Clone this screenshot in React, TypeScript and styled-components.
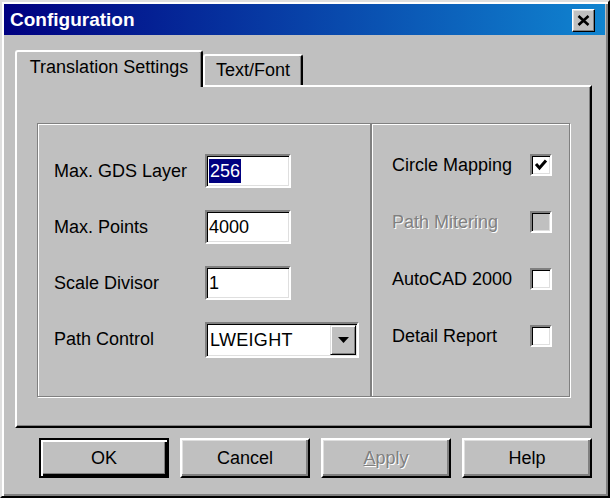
import React from "react";
import styled, { createGlobalStyle, css } from "styled-components";

const GlobalStyle = createGlobalStyle`
  html, body { margin: 0; padding: 0; background: #c0c0c0; }
  body { font-family: "Liberation Sans", Arial, sans-serif; }
`;

const Window = styled.div`
  box-sizing: border-box;
  width: 610px;
  height: 498px;
  background: #c0c0c0;
  border: 2px solid;
  border-color: #dfdfdf #000 #000 #dfdfdf;
  box-shadow: inset 2px 2px 0 #fff, inset -2px -2px 0 #808080;
  padding: 2px 3px 2px 2px;
  display: flex;
  flex-direction: column;
  font-family: "Liberation Sans", Arial, sans-serif;
  font-size: 18px;
  color: #000;
`;

const TitleBar = styled.div`
  height: 31px;
  flex: none;
  display: flex;
  align-items: center;
  justify-content: space-between;
  padding: 0 10px 0 6px;
  background: linear-gradient(to right, #000080, #1084d0);
`;

const Title = styled.span`
  color: #fff;
  font-weight: bold;
  font-size: 19px;
`;

const CloseButton = styled.div`
  box-sizing: border-box;
  width: 23px;
  height: 23px;
  margin-top: 2px;
  background: #c0c0c0;
  border: 1px solid;
  border-color: #fff #000 #000 #fff;
  box-shadow: inset -1px -1px 0 #808080, inset 1px 1px 0 #dfdfdf;
  display: flex;
  align-items: center;
  justify-content: center;
`;

const Body = styled.div`
  flex: 1;
  display: flex;
  flex-direction: column;
  padding: 15px 13px 0 11px;
`;

const TabStrip = styled.div`
  display: flex;
  align-items: flex-end;
  height: 35px;
  position: relative;
  z-index: 2;
`;

const Tab = styled.div<{ $active?: boolean; $width: number }>`
  box-sizing: border-box;
  width: ${(p) => p.$width}px;
  height: ${(p) => (p.$active ? 37 : 31)}px;
  margin-bottom: ${(p) => (p.$active ? -2 : 0)}px;
  padding-bottom: ${(p) => (p.$active ? 5 : 1)}px;
  display: flex;
  align-items: center;
  justify-content: center;
  background: #c0c0c0;
  border-top: 2px solid #fff;
  border-left: 2px solid #fff;
  border-right: 2px solid #000;
  border-radius: 3px 3px 0 0;
  box-shadow: inset -1px 0 0 #808080;
  white-space: nowrap;
`;

const Panel = styled.div`
  box-sizing: border-box;
  height: 343px;
  border: 2px solid;
  border-color: #fff #000 #000 #fff;
  box-shadow: inset -1px -1px 0 #808080;
  padding: 36px 20px 29px 20px;
  display: flex;
`;

const Group = styled.div<{ $width: number }>`
  box-sizing: border-box;
  width: ${(p) => p.$width}px;
  height: 100%;
  border: 1px solid #808080;
  box-shadow: inset 1px 1px 0 #fff, 1px 1px 0 #fff;
  display: grid;
  align-content: start;
`;

const FieldGroup = styled(Group)`
  grid-template-columns: 151px auto;
  grid-auto-rows: 34px;
  row-gap: 22px;
  padding: 30px 0 0 16px;
`;

const OptionGroup = styled(Group)`
  grid-template-columns: 138px 22px;
  grid-auto-rows: 22px;
  row-gap: 35px;
  padding: 30px 0 0 20px;
`;

const Label = styled.span<{ $disabled?: boolean }>`
  display: flex;
  align-items: center;
  white-space: nowrap;
  ${(p) =>
    p.$disabled &&
    css`
      color: #808080;
      text-shadow: 1px 1px 0 #fff;
    `}
`;

const sunken = css`
  border: 2px solid;
  border-color: #808080 #fff #fff #808080;
  box-shadow: inset 1px 1px 0 #000, inset -1px -1px 0 #dfdfdf;
`;

const TextBox = styled.div`
  box-sizing: border-box;
  width: 86px;
  height: 34px;
  background: #fff;
  ${sunken}
  padding-left: 2px;
  display: flex;
  align-items: center;
`;

const Selected = styled.span`
  background: #000080;
  color: #fff;
  line-height: 24px;
  padding: 0 1px;
`;

const Combo = styled.div`
  box-sizing: border-box;
  width: 154px;
  height: 36px;
  align-self: start;
  background: #fff;
  ${sunken}
  padding: 1px 1px 1px 3px;
  display: flex;
  align-items: stretch;
`;

const ComboText = styled.span`
  flex: 1;
  display: flex;
  align-items: center;
  letter-spacing: 0.3px;
`;

const DropButton = styled.div`
  box-sizing: border-box;
  width: 26px;
  background: #c0c0c0;
  border: 1px solid;
  border-color: #dfdfdf #000 #000 #dfdfdf;
  box-shadow: inset 1px 1px 0 #fff, inset -1px -1px 0 #808080;
  display: flex;
  align-items: center;
  justify-content: center;
`;

const CheckBox = styled.div<{ $disabled?: boolean }>`
  box-sizing: border-box;
  width: 22px;
  height: 22px;
  background: ${(p) => (p.$disabled ? "#c0c0c0" : "#fff")};
  ${sunken}
  display: flex;
  align-items: center;
  justify-content: center;
`;

const ButtonRow = styled.div`
  display: flex;
  justify-content: flex-end;
  gap: 11px;
  margin-top: 10px;
`;

const Button = styled.div<{ $default?: boolean; $disabled?: boolean }>`
  box-sizing: border-box;
  width: 130px;
  height: 40px;
  background: #c0c0c0;
  display: flex;
  align-items: center;
  justify-content: center;
  font-size: 18px;
  border: 2px solid;
  border-color: #fff #000 #000 #fff;
  box-shadow: inset -2px -2px 0 #808080, inset 1px 1px 0 #dfdfdf;
  ${(p) =>
    p.$default &&
    css`
      border-color: #000;
      box-shadow: inset 2px 2px 0 #fff, inset -2px -2px 0 #000,
        inset -3px -3px 0 #808080;
    `}
  ${(p) =>
    p.$disabled &&
    css`
      color: #808080;
      text-shadow: 1px 1px 0 #fff;
    `}
`;

const Mnemonic = styled.span`
  text-decoration: underline;
`;

const CloseIcon = () => (
  <svg width="13" height="11" viewBox="0 0 13 11">
    <path d="M1.5 1 L11.5 10 M11.5 1 L1.5 10" stroke="#000" strokeWidth="2.6" />
  </svg>
);

const ArrowIcon = () => (
  <svg width="11" height="6" viewBox="0 0 11 6">
    <path d="M0 0 H11 L5.5 6 Z" fill="#000" />
  </svg>
);

const CheckIcon = () => (
  <svg width="14" height="14" viewBox="0 0 14 14">
    <path d="M2 6 L5.5 10 L12 2.5" fill="none" stroke="#000" strokeWidth="3" />
  </svg>
);

const fields = [
  { label: "Max. GDS Layer", value: "256", selected: true },
  { label: "Max. Points", value: "4000" },
  { label: "Scale Divisor", value: "1" },
];

const options = [
  { label: "Circle Mapping", checked: true },
  { label: "Path Mitering", disabled: true },
  { label: "AutoCAD 2000" },
  { label: "Detail Report" },
];

export default function App() {
  return (
    <>
      <GlobalStyle />
      <Window>
        <TitleBar>
          <Title>Configuration</Title>
          <CloseButton>
            <CloseIcon />
          </CloseButton>
        </TitleBar>
        <Body>
          <TabStrip>
            <Tab $active $width={188}>Translation Settings</Tab>
            <Tab $width={100}>Text/Font</Tab>
          </TabStrip>
          <Panel>
            <FieldGroup $width={334}>
              {fields.map((f) => (
                <React.Fragment key={f.label}>
                  <Label>{f.label}</Label>
                  <TextBox>{f.selected ? <Selected>{f.value}</Selected> : f.value}</TextBox>
                </React.Fragment>
              ))}
              <Label>Path Control</Label>
              <Combo>
                <ComboText>LWEIGHT</ComboText>
                <DropButton>
                  <ArrowIcon />
                </DropButton>
              </Combo>
            </FieldGroup>
            <OptionGroup $width={199}>
              {options.map((o) => (
                <React.Fragment key={o.label}>
                  <Label $disabled={o.disabled}>{o.label}</Label>
                  <CheckBox $disabled={o.disabled}>{o.checked && <CheckIcon />}</CheckBox>
                </React.Fragment>
              ))}
            </OptionGroup>
          </Panel>
          <ButtonRow>
            <Button $default>OK</Button>
            <Button>Cancel</Button>
            <Button $disabled>
              <span>
                <Mnemonic>A</Mnemonic>pply
              </span>
            </Button>
            <Button>Help</Button>
          </ButtonRow>
        </Body>
      </Window>
    </>
  );
}
